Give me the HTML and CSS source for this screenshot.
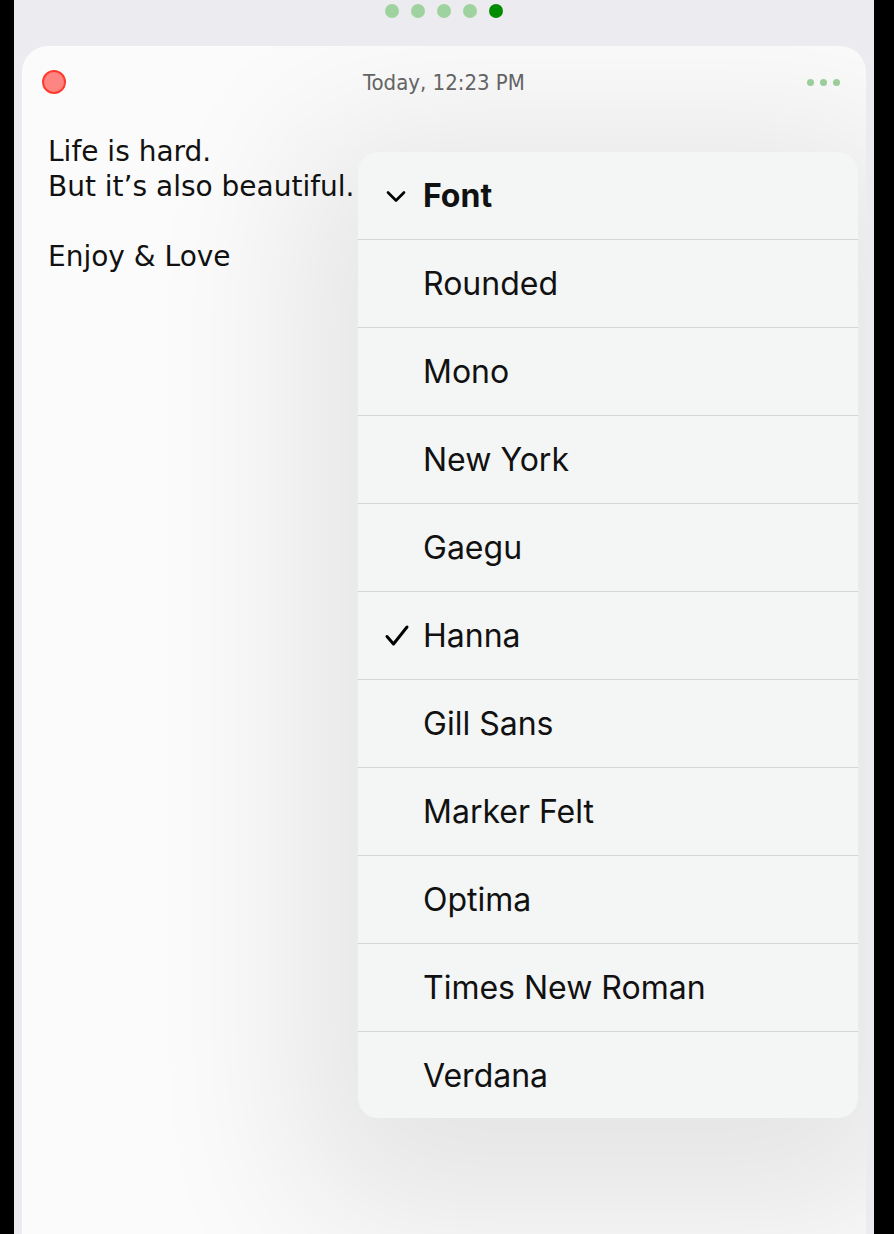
FILE: index.html
```html
<!DOCTYPE html>
<html lang="en">
<head>
  <meta charset="UTF-8">
  <meta name="viewport" content="width=device-width, initial-scale=1.0">
  <title>Note - Font menu</title>
  <link rel="stylesheet" href="styles.css">
</head>
<body>
  <div class="screen">
    <!-- Page dots -->
    <div class="pager">
      <span class="dot"></span>
      <span class="dot"></span>
      <span class="dot"></span>
      <span class="dot"></span>
      <span class="dot active"></span>
    </div>

    <!-- Note card -->
    <div class="card">
      <div class="card-header">
        <span class="close"></span>
        <span class="date">Today, 12:23 PM</span>
        <span class="more"><i></i><i></i><i></i></span>
      </div>
      <div class="note">
        <p>Life is hard.<br>But it’s also beautiful.</p>
        <p>Enjoy &amp; Love</p>
      </div>

      <!-- Font menu -->
      <div class="menu">
        <div class="menu-row menu-title">
          <span class="mark">
            <svg width="24" height="24" viewBox="0 0 24 24"><path d="M4 8.5l8 8 8-8" fill="none" stroke="#000" stroke-width="2.6" stroke-linecap="round" stroke-linejoin="round"/></svg>
          </span>
          Font
        </div>
        <div class="menu-row"><span class="mark"></span>Rounded</div>
        <div class="menu-row"><span class="mark"></span>Mono</div>
        <div class="menu-row"><span class="mark"></span>New York</div>
        <div class="menu-row"><span class="mark"></span>Gaegu</div>
        <div class="menu-row">
          <span class="mark">
            <svg width="26" height="26" viewBox="0 0 26 26"><path d="M3 13.5l6.5 7.5L23 4" fill="none" stroke="#000" stroke-width="3" stroke-linecap="round" stroke-linejoin="round"/></svg>
          </span>
          Hanna
        </div>
        <div class="menu-row"><span class="mark"></span>Gill Sans</div>
        <div class="menu-row"><span class="mark"></span>Marker Felt</div>
        <div class="menu-row"><span class="mark"></span>Optima</div>
        <div class="menu-row"><span class="mark"></span>Times New Roman</div>
        <div class="menu-row"><span class="mark"></span>Verdana</div>
      </div>
    </div>
  </div>
</body>
</html>
```

FILE: styles.css
```css
html, body {
  margin: 0;
  padding: 0;
  background: #000;
  height: 1234px;
  overflow: hidden;
}

.screen {
  margin: 0 20px 0 14px;
  height: 1234px;
  background: #ececf0;
  display: flex;
  flex-direction: column;
}

.pager {
  height: 46px;
  display: flex;
  justify-content: center;
  gap: 12px;
  padding-top: 4px;
  box-sizing: border-box;
}

.dot {
  width: 14px;
  height: 14px;
  border-radius: 50%;
  background: #9ed29e;
}

.dot.active {
  background: #008c00;
}

.card {
  flex: 1;
  margin: 0 8px;
  border-radius: 26px 26px 0 0;
  background: #fbfbfb;
  position: relative;
  overflow: hidden;
}

.card-header {
  height: 72px;
  display: flex;
  align-items: center;
  padding: 0 26px 0 20px;
  position: relative;
}

.close {
  width: 20px;
  height: 20px;
  border-radius: 50%;
  background: #ff8583;
  border: 2px solid #ff3b30;
}

.date {
  position: absolute;
  left: 0;
  right: 0;
  text-align: center;
  font-family: "DejaVu Sans Condensed", "Roboto", sans-serif;
  font-size: 22px;
  color: #666;
  pointer-events: none;
}

.more {
  margin-left: auto;
  display: flex;
  gap: 6px;
}

.more i {
  width: 7px;
  height: 7px;
  border-radius: 50%;
  background: #9ed29e;
}

.note {
  padding: 16px 26px 0;
  font-family: "DejaVu Sans", sans-serif;
  font-size: 28px;
  line-height: 35px;
  color: #111;
}

.note p {
  margin: 0 0 35px;
}

.menu {
  position: absolute;
  top: 106px;
  right: 8px;
  width: 500px;
  background: #f4f5f5;
  border-radius: 20px;
  box-shadow: 0 40px 160px 60px rgba(0, 0, 0, 0.09);
  font-family: "Inter", "Roboto", sans-serif;
  font-size: 32px;
  color: #111;
  overflow: hidden;
}

.menu-row {
  height: 87px;
  display: flex;
  align-items: center;
  border-top: 1px solid #d6d6d8;
}

.menu-row:last-child {
  height: 86px;
}

.menu-title {
  border-top: none;
  font-weight: 700;
}

.mark {
  width: 65px;
  padding-left: 26px;
  box-sizing: border-box;
  display: flex;
  align-items: center;
}
```
